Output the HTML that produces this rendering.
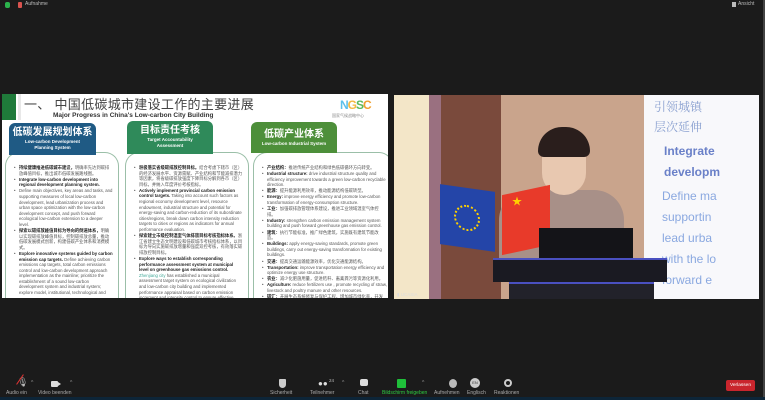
<!DOCTYPE html>
<html><head><meta charset="utf-8"><style>
*{margin:0;padding:0;box-sizing:border-box}
body{width:765px;height:400px;background:#1b1b1b;position:relative;overflow:hidden;font-family:"Liberation Sans","Noto Sans CJK SC",sans-serif}
.abs{position:absolute}
.slide{left:2px;top:94px;width:386px;height:204px;background:#fff;overflow:hidden}
.hd{position:absolute;border-radius:6px 6px 0 0;color:#fff;text-align:center;font-weight:bold}
.hd .cn{font-size:10px;line-height:13px;margin-top:3px}
.hd .en{font-size:4.5px;line-height:5.5px}
.bx{position:absolute;border:1px solid #9bbfa8;border-radius:14px 14px 0 0;border-bottom:none;padding:12px 5px 0 8px;font-size:4.3px;line-height:5.6px;color:#555}
.bx p{position:relative;padding-left:5px;margin-bottom:0.5px}
.bx p:before{content:"•";position:absolute;left:0}
.bx b{color:#222}
.tb{color:#aaa;font-size:5px;text-align:center;position:absolute;top:390px}
.ic{position:absolute;top:377px}
</style></head><body>
<div class="abs" style="left:5px;top:2px;width:5px;height:6px;background:#2bb24c;border-radius:2px"></div>
<div class="abs" style="left:18px;top:2px;width:4px;height:6px;background:#d9534f;border-radius:1px"></div>
<div class="abs" style="left:25px;top:1px;font-size:5px;color:#bbb">Aufnahme</div>
<div class="abs" style="left:732px;top:2px;width:4px;height:5px;background:#bbb"></div>
<div class="abs" style="left:738px;top:1px;font-size:5px;color:#bbb">Ansicht</div>
<div class="abs" style="left:763px;top:0;width:2px;height:400px;background:#444"></div>

<div class="abs slide">
 <div class="abs" style="left:0;top:0;width:14px;height:26px;background:#1f7a3a"></div>
 <div class="abs" style="left:16px;top:0;width:3px;height:26px;background:#e8e8e8"></div>
 <div class="abs" style="left:22px;top:0;font-size:13px;color:#444;letter-spacing:0.3px">一、 中国低碳城市建设工作的主要进展</div>
 <div class="abs" style="left:51px;top:18px;font-size:6.5px;font-weight:bold;color:#333">Major Progress in China's Low-carbon City Building</div>
 <div class="abs" style="left:338px;top:4px;font-size:12px;font-weight:bold;letter-spacing:-1px"><span style="color:#5bc0eb">N</span><span style="color:#f4b942">G</span><span style="color:#5cb85c">S</span><span style="color:#f0a030">C</span></div>
 <div class="abs" style="left:330px;top:19px;font-size:4px;color:#888">国家气候战略中心</div>

 <div class="bx" style="left:3px;top:58px;width:114px;height:150px">
  <p><b>持续健康推进低碳城市建设，</b>明确率先达到碳排放峰值目标，推出城市低碳发展路线图。</p>
  <p><b>Integrate low-carbon development into regional development planning system.</b></p>
  <p>Define main objectives, key areas and tasks, and supporting measures of local low-carbon development, lead urbanization process and urban space optimization with the low-carbon development concept, and push forward ecological low-carbon extension to a deeper level.</p>
  <p><b>探索以碳排放峰值目标为导向的倒逼体系，</b>明确以实现碳排放峰值目标，控制碳排放总量，推动低碳发展模式创新，构建低碳产业体系和消费模式。</p>
  <p><b>Explore innovative systems guided by carbon emission cap targets.</b> Define achieving carbon emissions cap targets, total carbon emissions control and low-carbon development approach implementation as the mainline; prioritize the establishment of a sound low-carbon development system and industrial system; explore model, institutional, technological and</p>
 </div>
 <div class="bx" style="left:123px;top:58px;width:124px;height:150px">
  <p><b>积极落实省级碳排放控制目标。</b>结合考虑下辖市（区）的经济发展水平、资源禀赋、产业结构和节能减排潜力等因素，将省级碳排放强度下降目标分解到各市（区）目标，并纳入年度评价考核指标。</p>
  <p><b>Actively implement provincial carbon emission control targets.</b> Taking into account such factors as regional economy development level, resource endowment, industrial structure and potential for energy-saving and carbon-reduction of its subordinate cities/regions, break down carbon intensity reduction targets to cities or regions as indicators for annual performance evaluation.</p>
  <p><b>探索建立市级控制温室气体排放目标考核指标体系。</b>浙江省建立生态文明建设和低碳城市考核指标体系，以目标为导向实施碳排放增量和强度双控考核，有效落实碳排放控制目标。</p>
  <p><b>Explore ways to establish corresponding performance assessment system at municipal level on greenhouse gas emissions control.</b> <span style="color:#4a9">Zhenjiang city</span> has established a municipal assessment target system on ecological civilization and low-carbon city building and implemented performance appraisal based on carbon emission increment and intensity control to ensure effective fulfilling of carbon emission control.</p>
 </div>
 <div class="bx" style="left:251px;top:58px;width:140px;height:150px">
  <p><b>产业结构：</b>推进传统产业结构和绿色低碳循环方向转变。</p>
  <p><b>Industrial structure:</b> drive industrial structure quality and efficiency improvement towards a green low-carbon recyclable direction.</p>
  <p><b>能源：</b>提升能源利用效率，推动能源结构低碳转型。</p>
  <p><b>Energy:</b> improve energy efficiency and promote low-carbon transformation of energy-consumption structure.</p>
  <p><b>工业：</b>加强碳排放管理体系建设，推进工业领域温室气体控排。</p>
  <p><b>Industry:</b> strengthen carbon emission management system building and push forward greenhouse gas emission control.</p>
  <p><b>建筑：</b>执行节能标准，推广绿色建筑，实施既有建筑节能改造。</p>
  <p><b>Buildings:</b> apply energy-saving standards, promote green buildings, carry out energy-saving transformation for existing buildings.</p>
  <p><b>交通：</b>提高交通运输能源效率，优化交通能源结构。</p>
  <p><b>Transportation:</b> improve transportation energy efficiency and optimize energy use structure.</p>
  <p><b>农业：</b>减少化肥施用量，促进秸秆、畜禽粪污等资源化利用。</p>
  <p><b>Agriculture:</b> reduce fertilizers use , promote recycling of straw, livestock and poultry manure and other resources.</p>
  <p><b>碳汇：</b>开展生态系统修复与保护工程，增加城市绿化率，开发CCER林业碳汇项目。</p>
  <p><b>Carbon sink:</b> implement ecosystem restoration and protection projects, increase urban greening rate, and develop CCER forestry carbon sink programs.</p>
 </div>
 <div class="hd" style="left:7px;top:29px;width:87px;height:32px;background:#1f5a84"><div class="cn">低碳发展规划体系</div><div class="en">Low-carbon Development<br>Planning System</div></div>
 <div class="hd" style="left:125px;top:27px;width:86px;height:33px;background:#2f8a5a"><div class="cn">目标责任考核</div><div class="en">Target Accountability<br>Assessment</div></div>
 <div class="hd" style="left:249px;top:28px;width:86px;height:31px;background:#4d8f3a"><div class="cn" style="margin-top:6px">低碳产业体系</div><div class="en">Low-carbon Industrial System</div></div>
</div>

<div class="abs" style="left:394px;top:95px;width:365px;height:204px;overflow:hidden;background:#8a5a48">
 <div class="abs" style="left:0;top:0;width:35px;height:204px;background:#f3e6c8"></div>
 <div class="abs" style="left:35px;top:0;width:12px;height:204px;background:#9a7080"></div>
 <div class="abs" style="left:47px;top:0;width:60px;height:204px;background:#7a4a3c"></div>
 <div class="abs" style="left:107px;top:0;width:143px;height:204px;background:#c9a48c"></div>
 <div class="abs" style="left:250px;top:0;width:115px;height:204px;background:#f8f8fb"></div>
 <div class="abs" style="left:260px;top:2px;font-size:12px;color:#8aa0d0;font-family:'Noto Serif CJK SC',serif;line-height:20px">引领城镇<br>层次延伸</div>
 <div class="abs" style="left:270px;top:46px;font-size:12px;font-weight:bold;color:#6a80c8;line-height:21px">Integrate<br>developm</div>
 <div class="abs" style="left:268px;top:91px;font-size:12px;color:#8aa8e0;line-height:21px">Define ma<br>supportin<br>lead urba<br>with the lo<br>forward e</div>
 <div class="abs" style="left:105px;top:95px;width:125px;height:80px;background:#a89088;border-radius:30px 30px 0 0"></div>
 <div class="abs" style="left:148px;top:38px;width:44px;height:62px;background:#e8c8b0;border-radius:20px 20px 22px 22px"></div>
 <div class="abs" style="left:144px;top:32px;width:52px;height:30px;background:#2a1e1c;border-radius:24px 24px 6px 6px"></div>
 <div class="abs" style="left:46px;top:93px;width:55px;height:60px;background:#2445a8;transform:skewY(8deg)"></div>
 <div class="abs" style="left:60px;top:110px;width:26px;height:26px;border:2px dotted #ffd000;border-radius:50%;transform:skewY(8deg)"></div>
 <div class="abs" style="left:108px;top:95px;width:48px;height:60px;background:#e83a2a;transform:skewY(-12deg)"></div>
 <div class="abs" style="left:118px;top:98px;color:#ffd000;font-size:10px">★</div>
 <div class="abs" style="left:145px;top:133px;width:94px;height:30px;background:#141418"></div>
 <div class="abs" style="left:99px;top:163px;width:174px;height:24px;background:#1a1a22;border-top:2px solid #4a50c0"></div>
 <div class="abs" style="left:115px;top:187px;width:145px;height:20px;background:#22222a;border-top:2px solid #4a50c0"></div>
 <div class="abs" style="left:3px;top:197px;font-size:4.5px;color:#ddd">▮ UCASIA</div>
</div>

<div class="ic" style="left:17px;top:377px;color:#bbb;font-size:9px">🎙</div>
<div class="abs" style="left:14px;top:379px;width:12px;height:1px;background:#d33;transform:rotate(-55deg)"></div>
<div class="abs" style="left:31px;top:380px;color:#999;font-size:5px">^</div>
<div class="tb" style="left:6px">Audio ein</div>
<div class="abs" style="left:51px;top:381px;width:7px;height:6px;background:#ddd;border-radius:1px"></div>
<div class="abs" style="left:58px;top:382px;border-left:3px solid #ddd;border-top:2px solid transparent;border-bottom:2px solid transparent"></div>
<div class="abs" style="left:70px;top:380px;color:#999;font-size:5px">^</div>
<div class="tb" style="left:38px">Video beenden</div>

<div class="abs" style="left:279px;top:379px;width:7px;height:9px;background:#ccc;border-radius:1px 1px 4px 4px"></div>
<div class="tb" style="left:270px">Sicherheit</div>
<div class="abs" style="left:318px;top:380px;color:#ddd;font-size:8px;line-height:8px">●●</div>
<div class="abs" style="left:329px;top:378px;color:#bbb;font-size:4.5px">24</div>
<div class="abs" style="left:342px;top:380px;color:#999;font-size:5px">^</div>
<div class="tb" style="left:310px">Teilnehmer</div>
<div class="abs" style="left:360px;top:379px;width:8px;height:7px;background:#ddd;border-radius:2px"></div>
<div class="tb" style="left:358px">Chat</div>
<div class="abs" style="left:397px;top:379px;width:9px;height:9px;background:#1fbf3a;border-radius:1px"></div>
<div class="abs" style="left:422px;top:380px;color:#999;font-size:5px">^</div>
<div class="tb" style="left:382px;color:#2ecc40">Bildschirm freigeben</div>
<div class="abs" style="left:449px;top:379px;width:8px;height:9px;background:#bbb;border-radius:50%"></div>
<div class="tb" style="left:434px">Aufnehmen</div>
<div class="abs" style="left:470px;top:378px;width:10px;height:10px;background:#ccc;border-radius:50%;font-size:4px;color:#333;text-align:center;line-height:10px">EN</div>
<div class="tb" style="left:467px">Englisch</div>
<div class="abs" style="left:504px;top:379px;width:8px;height:8px;border:2px solid #ccc;border-radius:50%"></div>
<div class="tb" style="left:494px">Reaktionen</div>
<div class="abs" style="left:726px;top:380px;width:29px;height:11px;background:#c9252d;border-radius:2px;color:#fff;font-size:4.8px;text-align:center;line-height:11px">Verlassen</div>
<div class="abs" style="left:0;top:397px;width:765px;height:3px;background:#0d2538"></div>
</body></html>
